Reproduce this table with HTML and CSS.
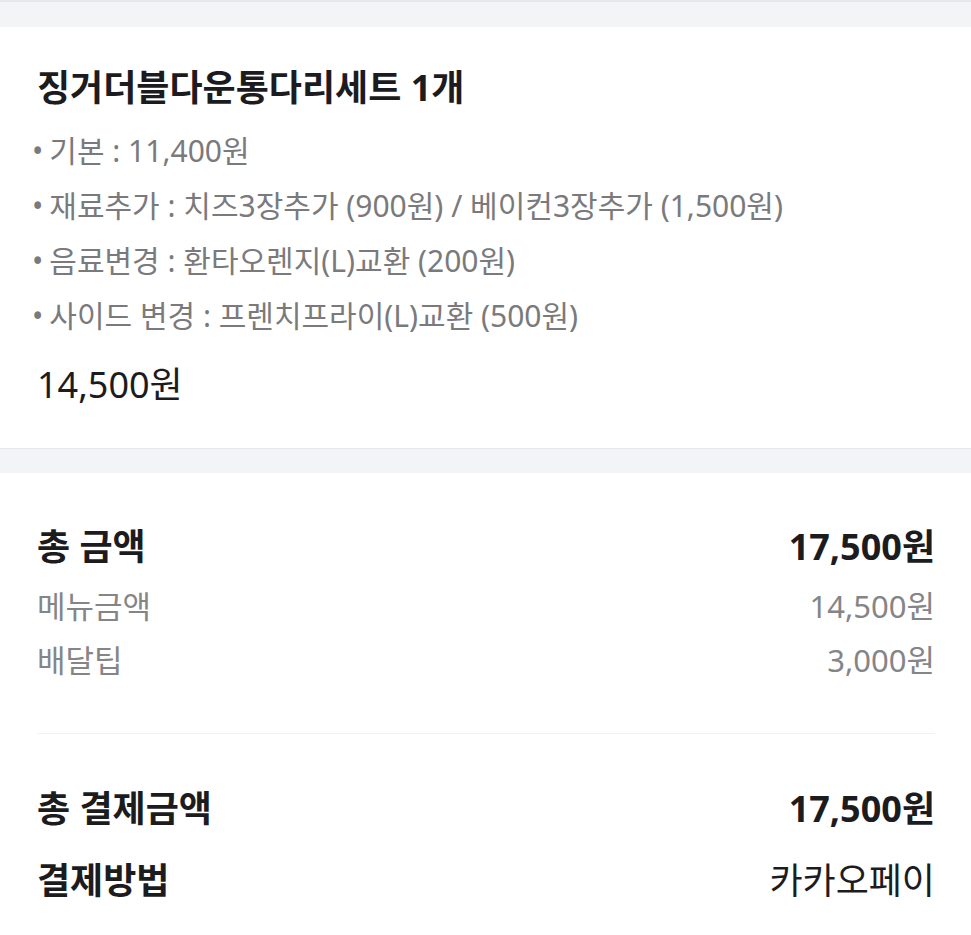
FILE: index.html
```html
<!DOCTYPE html>
<html lang="ko">
<head>
<meta charset="utf-8">
<title>주문 상세</title>
<link rel="stylesheet" href="styles.css">
</head>
<body>
<div class="topband"></div>
<section class="item">
  <h1 class="item-title">징거더블다운통다리세트 1개</h1>
  <ul class="options">
    <li>기본 : 11,400원</li>
    <li>재료추가 : 치즈3장추가 (900원) / 베이컨3장추가 (1,500원)</li>
    <li>음료변경 : 환타오렌지(L)교환 (200원)</li>
    <li>사이드 변경 : 프렌치프라이(L)교환 (500원)</li>
  </ul>
  <div class="item-price">14,500원</div>
</section>
<div class="band"></div>
<section class="summary">
  <div class="row strong"><span>총 금액</span><span>17,500원</span></div>
  <div class="sub">
    <div class="row muted"><span>메뉴금액</span><span>14,500원</span></div>
    <div class="row muted"><span>배달팁</span><span>3,000원</span></div>
  </div>
  <hr class="divider">
  <div class="row strong"><span>총 결제금액</span><span>17,500원</span></div>
  <div class="row strong pay"><span>결제방법</span><span class="normal">카카오페이</span></div>
</section>
</body>
</html>
```
FILE: styles.css
```css
* { box-sizing: border-box; }
html, body { margin: 0; padding: 0; background: #fff; }
body {
  font-family: "Noto Sans", "Noto Sans CJK KR", sans-serif;
  color: #1c1c1e;
  width: 971px;
}
.topband {
  height: 27px;
  background: #f3f4f6;
  border-top: 2px solid #e6e7ea;
}
.item {
  padding: 39px 37px 41px;
}
.item-title {
  margin: 0;
  font-size: 36px;
  line-height: 44px;
  font-weight: 700;
  color: #1c1c1e;
}
.options {
  list-style: none;
  margin: 13px 0 0;
  padding: 0;
  color: #7a7a7c;
  font-size: 30px;
  line-height: 55px;
}
.options li::before {
  content: "•";
  margin-right: 6px;
  margin-left: -5px;
}
.item-price {
  margin-top: 20px;
  font-size: 36px;
  line-height: 44px;
  color: #1c1c1e;
}
.band {
  height: 25px;
  background: #f3f4f6;
  border-top: 1px solid #e6e7ea;
}
.summary {
  padding: 52px 36px 40px 37px;
}
.row {
  display: flex;
  justify-content: space-between;
  align-items: center;
}
.strong {
  font-size: 36px;
  line-height: 44px;
  font-weight: 700;
  color: #1c1c1e;
}
.sub { margin-top: 10px; }
.muted {
  font-size: 31px;
  line-height: 54px;
  color: #858587;
}
.divider {
  border: 0;
  border-top: 1px solid #f0f1f3;
  margin: 46px 0 53px;
}
.pay { margin-top: 28px; }
.normal { font-weight: 400; }
```
